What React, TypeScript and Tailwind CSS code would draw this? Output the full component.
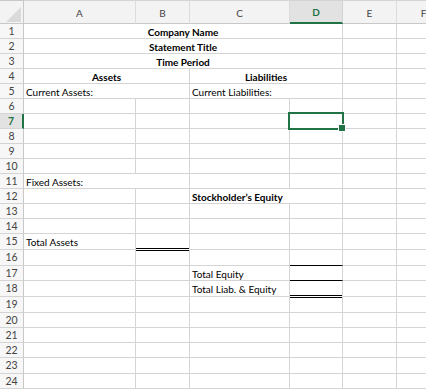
import React from "react";

type C = {
  span?: 1 | 2 | 4;
  text?: string;
  bold?: boolean;
  center?: boolean;
  cls?: string;
};

const spanCls: Record<number, string> = { 1: "", 2: "col-span-2", 4: "col-span-4" };

const blanks = (n: number): C[] => Array.from({ length: n }, () => ({}));

const rows: { h: string; cells: C[] }[] = [
  { h: "h-[15px]", cells: [{ span: 4, text: "Company Name", bold: true, center: true }, ...blanks(2)] },
  { h: "h-[15px]", cells: [{ span: 4, text: "Statement Title", bold: true, center: true }, ...blanks(2)] },
  { h: "h-[15px]", cells: [{ span: 4, text: "Time Period", bold: true, center: true }, ...blanks(2)] },
  {
    h: "h-[15px]",
    cells: [
      { span: 2, text: "Assets", bold: true, center: true },
      { span: 2, text: "Liabilities", bold: true, center: true },
      ...blanks(2),
    ],
  },
  {
    h: "h-[15px]",
    cells: [{ span: 2, text: "Current Assets:" }, { span: 2, text: "Current Liabilities:" }, ...blanks(2)],
  },
  { h: "h-[15px]", cells: blanks(6) },
  { h: "h-[15px]", cells: blanks(6) },
  { h: "h-[15px]", cells: blanks(6) },
  { h: "h-[15px]", cells: blanks(6) },
  { h: "h-[15px]", cells: blanks(6) },
  { h: "h-[15px]", cells: [{ span: 2, text: "Fixed Assets:" }, ...blanks(4)] },
  { h: "h-[15px]", cells: [...blanks(2), { span: 2, text: "Stockholder\u2019s Equity", bold: true }, ...blanks(2)] },
  { h: "h-[15px]", cells: blanks(6) },
  { h: "h-[15px]", cells: blanks(6) },
  {
    h: "h-[16px]",
    cells: [
      { text: "Total Assets" },
      { cls: "border-b-white shadow-[inset_0_-1px_0_#000]" },
      ...blanks(4),
    ],
  },
  {
    h: "h-[16px]",
    cells: [{}, { cls: "shadow-[inset_0_1px_0_#000]" }, {}, { cls: "border-b-black" }, ...blanks(2)],
  },
  {
    h: "h-[15px]",
    cells: [{}, {}, { text: "Total Equity" }, { cls: "border-b-black" }, ...blanks(2)],
  },
  {
    h: "h-[16px]",
    cells: [
      {},
      {},
      { text: "Total Liab. & Equity" },
      { cls: "border-b-white shadow-[inset_0_-1px_0_#000]" },
      ...blanks(2),
    ],
  },
  { h: "h-[16px]", cells: [{}, {}, {}, { cls: "shadow-[inset_0_1px_0_#000]" }, ...blanks(2)] },
  { h: "h-[15px]", cells: blanks(6) },
  { h: "h-[15px]", cells: blanks(6) },
  { h: "h-[15px]", cells: blanks(6) },
  { h: "h-[16px]", cells: blanks(6) },
  { h: "h-[15px]", cells: blanks(6) },
];

const gridCols = "grid grid-cols-[24px_112px_54px_100px_53px_54px_54px]";

export default function App() {
  return (
    <div
      className="relative w-[426px] h-[389px] overflow-hidden bg-white text-black"
      style={{ fontFamily: "Lato, 'Open Sans', sans-serif" }}
    >
      <div className="w-[451px]">
        {/* Column headers */}
        <div className={`${gridCols} h-[24px]`}>
          <div className="relative border-t border-b border-r border-[#c8c8c8] bg-[#f3f3f3]">
            <svg className="absolute left-0 top-0" width="23" height="22" viewBox="0 0 23 22">
              <polygon points="6,21 21,21 21,6" fill="#dadada" />
            </svg>
          </div>
          {["A", "B", "C", "D", "E", "F"].map((l) =>
            l === "D" ? (
              <div
                key={l}
                className="flex items-center justify-center border-t border-r border-t-[#d4d4d4] border-r-[#d4d4d4] border-b-2 border-b-[#217346] bg-[#e2e2e2] text-[10px] font-bold text-[#217346] leading-none pt-[1px]"
              >
                {l}
              </div>
            ) : (
              <div
                key={l}
                className="flex items-center justify-center border-t border-b border-r border-t-[#d4d4d4] border-r-[#dcdcdc] border-b-[#c8c8c8] bg-[#f3f3f3] text-[10px] text-[#444] leading-none pt-[1px]"
              >
                {l}
              </div>
            )
          )}
        </div>

        {rows.map((r, i) => {
          const n = i + 1;
          const sel = n === 7;
          return (
            <div key={n} className={`${gridCols} ${r.h}`}>
              <div
                className={
                  sel
                    ? "flex items-center justify-center border-b border-b-[#d4d4d4] border-r-2 border-r-[#217346] bg-[#e2e2e2] text-[10.5px] font-bold text-[#217346] leading-none"
                    : "flex items-center justify-center border-b border-r border-b-[#d4d4d4] border-r-[#c8c8c8] bg-[#f7f7f7] text-[10.5px] text-[#444] leading-none"
                }
              >
                {n}
              </div>
              {r.cells.map((c, j) => (
                <div
                  key={j}
                  className={`${spanCls[c.span ?? 1]} flex items-center border-b border-r border-[#d4d4d4] px-[2px] pt-[1px] whitespace-nowrap text-[10px] leading-none ${
                    c.center ? "justify-center" : "justify-start"
                  } ${c.bold ? "font-bold" : ""} ${c.cls ?? ""}`}
                >
                  {c.text ?? ""}
                </div>
              ))}
            </div>
          );
        })}
      </div>

      {/* Selected cell D7 */}
      <div className="pointer-events-none absolute left-[288px] top-[112px] h-[18px] w-[56px] border-2 border-[#217346]" />
      <div className="pointer-events-none absolute left-[339px] top-[125px] h-[6px] w-[6px] bg-[#217346] ring-1 ring-white" />
    </div>
  );
}
